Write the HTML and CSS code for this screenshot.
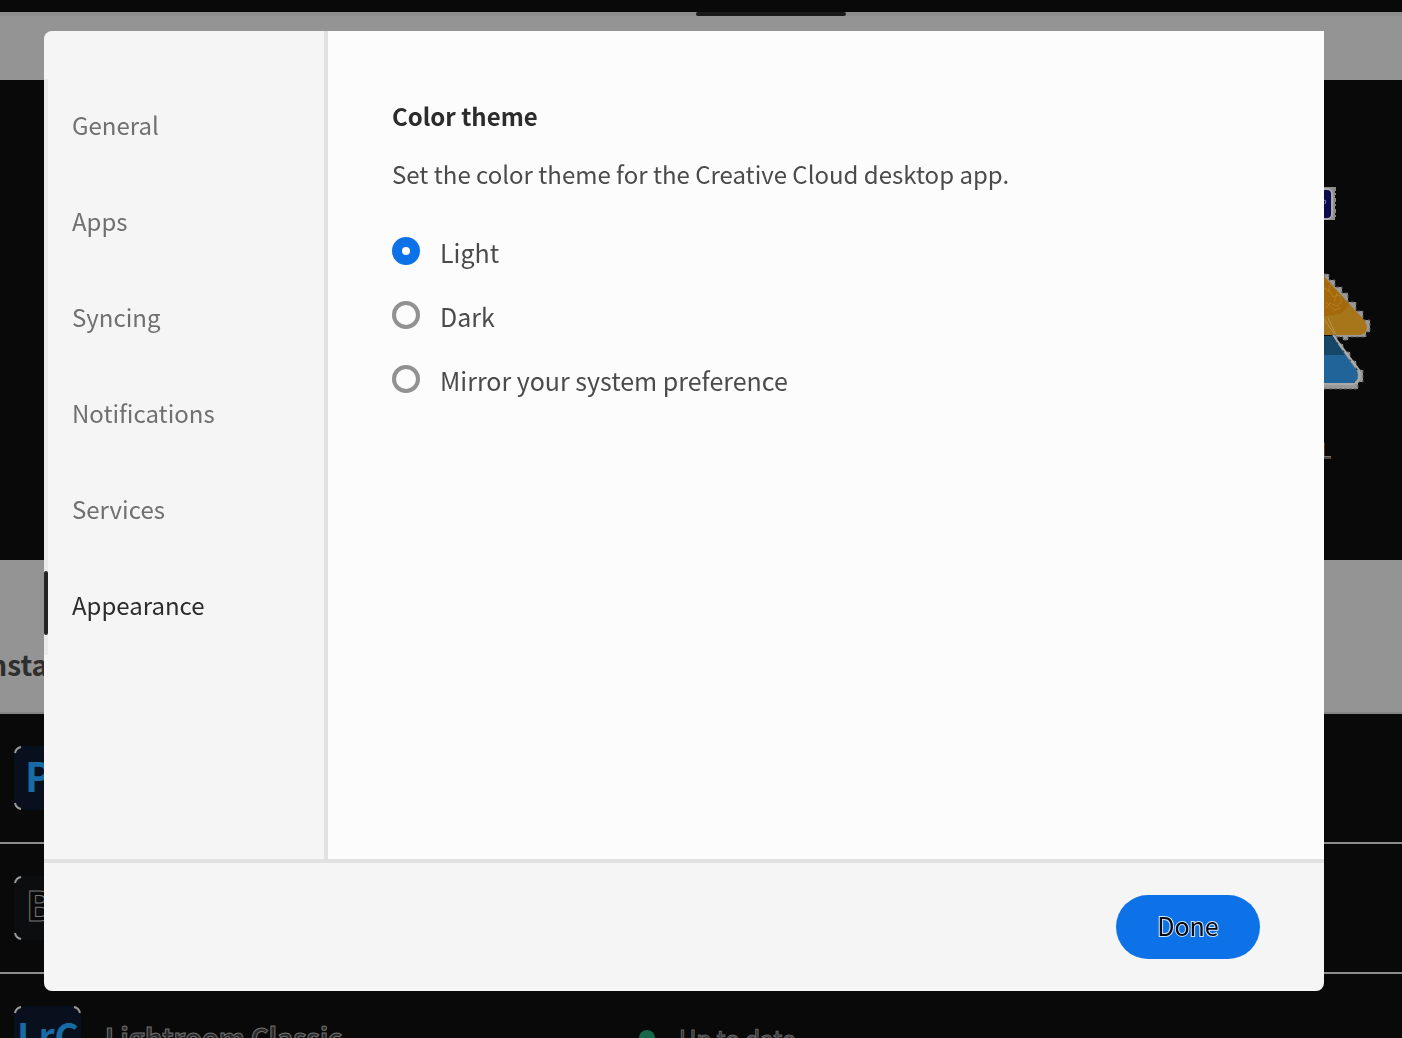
FILE: index.html
```html
<!DOCTYPE html>
<html lang="en">
<head>
<meta charset="UTF-8">
<meta name="viewport" content="width=device-width, initial-scale=1.0">
<title>Creative Cloud - Preferences</title>
<link rel="stylesheet" href="styles.css">
</head>
<body>
<div class="page">
    <div class="topbar"></div>
    <div class="tabs"><span class="tab-line"></span></div>
    <div class="hero">
        <svg class="hero-art" width="112" height="480" viewBox="0 0 112 480" aria-hidden="true">
            <!-- app badge -->
            <path d="M0 107h45v33H0z" fill="#8f8f8f"/>
            <path d="M45 107v33" stroke="#888" stroke-width="2" stroke-dasharray="4 2 2 3"/>
            <rect x="10" y="109" width="32" height="30" rx="5" fill="#0b0a4c" stroke="#aaa" stroke-width="2"/>
            <path d="M34 120l2 1-1 3" fill="none" stroke="#8b8bb8"/>
            <!-- yellow triangle -->
            <path d="M34 194h5v6h6v7h7v6h6v9h8v9h7v9h7v12h-4v5H58v3h-5v-3h-8" fill="#999" stroke="#555" stroke-dasharray="3 2"/>
            <path d="M0 158l34 38 41 45q5 11-4 14H0z" fill="#a7751a"/>
            <path d="M34 198l25 27-8 9-17 2z" fill="#a3690c"/>
            <path d="M34 208l6 3 3 6 6-2 3 6-5 5-7-3-4 5M36 222l8 8 7-2M40 205l-2 7M47 213l-3 9" fill="none" stroke="#b57f1a"/>
            <path d="M34 239l11 16M38 238l8 17" fill="none" stroke="#b99250"/>
            <!-- blue triangle -->
            <path d="M43 255h4v9h6v8h7v9h6v9h7v12h-5v7H20v-5h46" fill="#999" stroke="#555" stroke-dasharray="3 2"/>
            <path d="M0 256h42l25 35q3 9-4 12H0z" fill="#20649a"/>
            <path d="M0 256h42l13 19H0z" fill="#174766"/>
            <path d="M43 255l26 35q3 11-5 14H30" fill="none" stroke="#aaa" stroke-width="2"/>
            <text class="hero-letter" x="30" y="378">L</text>
        </svg>
    </div>
    <div class="section-head"><h2>Installed</h2></div>
    <div class="app-row">
        <svg class="app-icon" width="67" height="64" viewBox="0 0 67 64">
            <rect width="67" height="64" rx="9" fill="#08101e"/>
            <path class="corners" d="M1 7q1-5 6-6M60 1q5 1 6 6M66 57q-1 5-6 6M7 63q-5-1-6-6"/>
            <text class="icon-text" x="11" y="46">Ps</text>
        </svg>
    </div>
    <div class="app-row">
        <svg class="app-icon" width="67" height="64" viewBox="0 0 67 64">
            <rect width="67" height="64" rx="9" fill="#0b0d0f"/>
            <path class="corners" d="M1 7q1-5 6-6M60 1q5 1 6 6M66 57q-1 5-6 6M7 63q-5-1-6-6"/>
            <text class="icon-text outlined" x="12" y="45">Br</text>
        </svg>
    </div>
    <div class="app-row">
        <svg class="app-icon" width="67" height="64" viewBox="0 0 67 64">
            <rect width="67" height="64" rx="9" fill="#08101e"/>
            <path class="corners" d="M1 7q1-5 6-6M60 1q5 1 6 6M66 57q-1 5-6 6M7 63q-5-1-6-6"/>
            <text class="icon-text small" x="3" y="44">LrC</text>
        </svg>
        <span class="app-name">Lightroom Classic</span>
        <span class="app-status"><span class="dot"></span>Up to date</span>
    </div>
</div>

<div class="overlay">
    <div class="dialog" role="dialog" aria-label="Preferences">
        <div class="dialog-body">
            <nav class="sidebar">
                <a href="#general">General</a>
                <a href="#apps">Apps</a>
                <a href="#syncing">Syncing</a>
                <a href="#notifications">Notifications</a>
                <a href="#services">Services</a>
                <a href="#appearance" class="active">Appearance</a>
            </nav>
            <main class="content">
                <h1>Color theme</h1>
                <p>Set the color theme for the Creative Cloud desktop app.</p>
                <div class="options">
                    <label class="option"><input type="radio" name="theme" value="light" checked><span>Light</span></label>
                    <label class="option"><input type="radio" name="theme" value="dark"><span>Dark</span></label>
                    <label class="option"><input type="radio" name="theme" value="system"><span>Mirror your system preference</span></label>
                </div>
            </main>
        </div>
        <footer class="dialog-footer">
            <button type="button">Done</button>
        </footer>
    </div>
</div>
</body>
</html>
```
FILE: styles.css
```css
* {
    box-sizing: border-box;
}
body {
    margin: 0;
    height: 100vh;
    overflow: hidden;
    background: #090909;
    color: #4b4b4b;
    font-family: "Noto Sans CJK SC", "Noto Sans", sans-serif;
    font-size: 24px;
    line-height: 32px;
}
h1, h2, p {
    margin: 0;
}

/* page behind the dialog */
.page {
    height: 100vh;
    overflow: hidden;
}
.topbar {
    height: 12px;
}
.tabs {
    display: flex;
    justify-content: center;
    height: 68px;
    padding-left: 140px;
    background: #949494;
    box-shadow: inset 0 4px #8e8e8e;
}
.tab-line {
    width: 150px;
    height: 4px;
    border-radius: 2px;
    background: #191919;
}
.hero {
    display: flex;
    justify-content: flex-end;
    height: 480px;
}
.hero-letter {
    font-size: 20px;
    fill: #090909;
    stroke: #777;
}
.section-head {
    height: 154px;
    padding-top: 88px;
    background: #949494;
    border-bottom: 2px solid #858585;
}
.section-head h2 {
    margin-left: -20px;
    color: #2e2e2e;
    font-size: 28px;
}
.app-row {
    display: flex;
    align-items: center;
    height: 130px;
    padding-left: 14px;
    border-bottom: 2px solid #8c8c8c;
}
.icon-text {
    fill: #196ba5;
    font-size: 40px;
    font-weight: bold;
}
.icon-text.small {
    font-size: 37px;
}
.icon-text.outlined {
    fill: #090909;
    stroke: #777;
}
.corners {
    fill: none;
    stroke: #999;
    stroke-width: 2;
}
.app-name {
    width: 532px;
    padding: 0 0 2px 24px;
    color: #282828;
    font-size: 27px;
    font-weight: bold;
    -webkit-text-stroke: 1px #707070;
}
.app-status {
    display: flex;
    align-items: center;
    gap: 24px;
    padding-left: 26px;
    color: #282828;
    -webkit-text-stroke: 1px #666;
}
.dot {
    width: 16px;
    height: 16px;
    border-radius: 50%;
    background: #17674a;
}

/* dialog */
.overlay {
    position: fixed;
    inset: 0;
    display: flex;
    padding: 31px 78px 47px 44px;
}
.dialog {
    flex: 1;
    display: flex;
    flex-direction: column;
    overflow: hidden;
    border-radius: 8px 0 8px 8px;
    background: #f5f5f5;
}
.dialog-body {
    flex: 1;
    display: flex;
}
.sidebar {
    width: 284px;
    padding-top: 48px;
    border-right: 4px solid #e1e1e1;
}
.sidebar a {
    display: flex;
    align-items: center;
    height: 96px;
    padding: 0 0 4px 24px;
    border-left: 4px solid #eaeaea;
    color: #707070;
    text-decoration: none;
}
.sidebar a.active {
    padding-left: 0;
    border-left: 0;
    background: linear-gradient(#eaeaea, #eaeaea) left / 4px 100% no-repeat;
    color: #2c2c2c;
}
.sidebar a.active::before {
    content: "";
    width: 4px;
    height: 64px;
    margin: 0 24px 4px 0;
    border-radius: 2px;
    background: #252525;
}
.content {
    flex: 1;
    padding: 69px 64px;
    background: #fcfcfc;
}
.content h1 {
    color: #2c2c2c;
    font-size: 24px;
    line-height: 32px;
}
.content p {
    margin: 26px 0 29px;
}
.option {
    display: flex;
    align-items: center;
    gap: 20px;
    height: 64px;
    font-size: 25px;
}
.option span {
    padding-top: 2px;
}
.option input {
    appearance: none;
    width: 28px;
    height: 28px;
    margin: 0;
    border: 4px solid #919191;
    border-radius: 50%;
    background: #fcfcfc;
}
.option input:checked {
    border: 10px solid #0d72e7;
}
.dialog-footer {
    display: flex;
    justify-content: flex-end;
    padding: 32px 64px;
    border-top: 4px solid #e1e1e1;
}
.dialog-footer button {
    width: 144px;
    height: 64px;
    padding: 0 0 4px;
    border: 0;
    border-radius: 32px;
    background: #0d72e7;
    color: #050a14;
    font: inherit;
    font-size: 25px;
    -webkit-text-stroke: 2px #d5e6fb;
    paint-order: stroke fill;
}
```
